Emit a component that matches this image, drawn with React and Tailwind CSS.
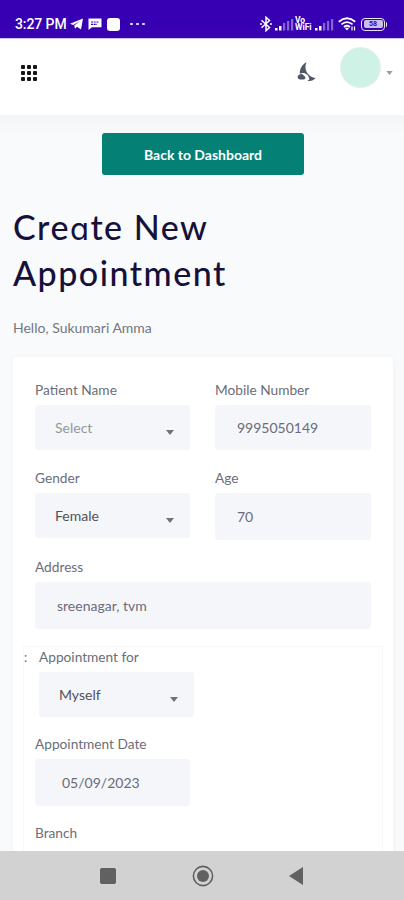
import React from "react";
import clsx from "clsx";

const labelClass = "block h-5 text-[13.7px] leading-5 text-[#6b6d78]";

const Caret = ({ className }) => (
  <svg viewBox="0 0 8 5" className={className} fill="currentColor">
    <path d="M0 0h8L4 5z" />
  </svg>
);

const SignalBars = () => (
  <svg viewBox="0 0 19 13" className="w-[19px] h-[13px]" fill="white">
    <rect x="0" y="10" width="2.5" height="2.5" />
    <rect x="4" y="8" width="2.5" height="4.5" />
    <rect x="8" y="5" width="2.2" height="7.5" opacity="0.4" />
    <rect x="12" y="3" width="2.2" height="9.5" opacity="0.4" />
    <rect x="16" y="1" width="2.2" height="11.5" opacity="0.4" />
  </svg>
);

const StatusBar = () => (
  <div className="h-[38px] shrink-0 bg-[#3700b3] text-white flex items-end justify-between pl-[15px] pr-[17px] pb-[4px] font-[Roboto,sans-serif]">
    <div className="flex items-center h-5">
      <span className="w-[53px] text-[14px] font-medium leading-5 tracking-[-0.1px] whitespace-nowrap">3:27 PM</span>
      {/* Telegram */}
      <svg viewBox="0 0 13 12" className="ml-[2px] w-[13px] h-3" fill="white">
        <path d="M0 5.8 13 .4 11 11.6 7 8.8 5 10.8 4.2 7.4 10 3 3.2 7z" />
      </svg>
      {/* Message */}
      <svg viewBox="0 0 14 12" className="ml-[5px] w-[14px] h-3" fill="white">
        <path d="M.5.5h13v8.7H4L.5 12z" />
        <path d="M3 4h8M3 6.3h6" stroke="#3700b3" strokeWidth="1.2" strokeDasharray="2 .7" />
      </svg>
      <span className="ml-[5px] size-[13px] rounded-[3px] bg-white" />
      <span className="ml-[10px] flex gap-[3.5px]">
        <span className="size-[2.5px] rounded-full bg-white/90" />
        <span className="size-[2.5px] rounded-full bg-white/90" />
        <span className="size-[2.5px] rounded-full bg-white/90" />
      </span>
    </div>
    <div className="flex items-center h-5">
      {/* Bluetooth */}
      <svg viewBox="0 0 12 16" className="w-[12px] h-4" fill="none" stroke="white" strokeWidth="1.5">
        <path d="M1.5 4.3 9.5 11.5 6 14.8V1.2l3.5 3.3-8 7.2" />
        <path d="M0 8h2M10 8h2" />
      </svg>
      <span className="ml-[3px] flex"><SignalBars /></span>
      <span className="ml-[1px] w-[18px] flex flex-col text-[8.5px] font-bold leading-[7.5px]">
        <span>Vo</span>
        <span>WiFi</span>
      </span>
      <span className="ml-[2px] flex"><SignalBars /></span>
      {/* Wi-Fi */}
      <svg viewBox="0 0 18 14" className="ml-[4px] w-[18px] h-[14px]" fill="none" stroke="white" strokeWidth="1.8">
        <path d="M.8 4.7Q9-2.2 17.2 4.7M3.4 7.4Q9 2.8 14.6 7.4M6 10Q9 7.5 12 10" />
        <path d="m9 13.5-2.3-2.8h4.6z" fill="white" stroke="none" />
        <path d="M14 9.5v4M16.5 9.5v4" strokeWidth="1.2" />
      </svg>
      <span className="ml-[5px] w-[24px] h-[13px] rounded-[4px] border-[1.5px] border-white/90 p-[1.5px]">
        <span className="flex h-full items-center justify-center rounded-[2px] bg-white/75 text-[7px] font-bold leading-none text-[#3700b3]">
          58
        </span>
      </span>
      <span className="ml-[0.5px] w-[1.5px] h-[5px] rounded-r bg-white/90" />
    </div>
  </div>
);

const Header = () => (
  <header className="h-[77px] shrink-0 bg-white flex items-start justify-between border-t border-[#cfc3ef] pl-[21px] pr-[11px] shadow-[0_4px_24px_rgba(100,110,110,0.12)]">
    <div className="mt-[26px] grid grid-cols-3 gap-[2px]">
      {Array.from({ length: 9 }, (_, i) => (
        <span key={i} className="size-[4px] rounded-[1px] bg-[#161616]" />
      ))}
    </div>
    <div className="flex items-start">
      <svg viewBox="0 0 19 20" className="mt-[23px] w-[19px] h-5" fill="#505963">
        <path d="M9.6.3C7.7 4.1 8.2 8.6 11 11.9c1.9 2.3 4.5 3.7 7.5 4.1-1.5 1.8-3.6 2.9-6 3-.7 0-1.3 0-2-.2l1.8-1.2c.1-2.7-1.5-5.3-4.1-6.2-1.7-.6-3.8-.4-5.4.4C2.6 7.3 5.2 2 9.6.3Z" />
        <path d="M4.2 12c1.3 0 2.4.8 2.8 2 .8.1 1.4.8 1.4 1.7 0 1-.8 1.7-1.8 1.7H3.2C1.7 17.4.6 16.3.6 15c0-1 .6-1.8 1.5-2.1.5-.6 1.2-.9 2.1-.9Z" />
      </svg>
      <span className="ml-[24px] mt-[8px] size-[41px] rounded-full bg-[#cff2e7] border border-[#e8eeec]" />
      <Caret className="ml-[5px] mt-[32px] w-[7px] h-[4px] text-[#999da1]" />
    </div>
  </header>
);

const Field = ({ label, value, select, muted, tall, inset, className }) => (
  <div className={className}>
    <label className={labelClass}>{label}</label>
    <div
      className={clsx(
        "mt-[5px] flex items-center rounded-[3px] bg-[#f4f6fa] text-[14px] pr-4",
        tall ? "h-[47px]" : "h-[45px]",
        select ? "pl-5" : inset || "pl-[22px]",
        muted ? "text-[#94969d]" : select ? "text-[#50525a]" : "text-[#6a6c7a]"
      )}
    >
      <span className="flex-1">{value}</span>
      {select && <Caret className="mt-[9px] w-[8px] h-[5px] text-[#707278]" />}
    </div>
  </div>
);

const NavBar = () => (
  <nav className="h-[49px] shrink-0 bg-[#d2d2d2] flex items-center pl-[100px]">
    <span className="mt-px size-[16px] rounded-[2px] bg-[#616161]" />
    <svg viewBox="0 0 22 22" className="ml-[76px] mt-px size-[22px]">
      <circle cx="11" cy="11" r="9.6" fill="none" stroke="#616161" strokeWidth="1.6" />
      <circle cx="11" cy="11" r="6" fill="#616161" />
    </svg>
    <svg viewBox="0 0 14 18" className="ml-[75px] mt-px w-[14px] h-[18px]" fill="#616161">
      <path d="M14 0v18L0 9z" />
    </svg>
  </nav>
);

const App = () => {
  return (
    <div className="w-[404px] h-[900px] flex flex-col overflow-hidden bg-[#f8fafc] font-[Lato,sans-serif]">
      <StatusBar />
      <Header />

      <main className="flex-1 min-h-0 overflow-hidden pl-[13px] pr-[11px] pt-[18px] bg-linear-to-b from-[#f3f5f6] to-[#f8fafc] to-[24px]">
        <button className="block ml-[89px] w-[202px] h-[42px] rounded-[3px] bg-[#058075] text-white text-[14px] font-bold">
          Back to Dashboard
        </button>

        <h1 className="mt-[29px] text-[34px] leading-[46px] font-medium tracking-[1.5px] text-[#16113a]">
          Cre<span className="font-[Inter,sans-serif] text-[31px] font-normal leading-none [font-feature-settings:'cv11']">a</span>te New
          <br />
          Appointment
        </h1>

        <p className="mt-[22px] text-[14px] leading-5 text-[#74767f]">Hello, Sukumari Amma</p>

        {/* Appointment form */}
        <section className="mt-[19px] h-[520px] rounded-[3px] bg-white px-[10px] pt-[23px] shadow-[0_0_5px_rgba(80,90,110,0.06)]">
          <div className="px-3">
            <div className="grid grid-cols-[155px_156px] gap-x-[25px] gap-y-[18px]">
              <Field label="Patient Name" value="Select" select muted />
              <Field label="Mobile Number" value="9995050149" />
              <Field label="Gender" value="Female" select />
              <Field label="Age" value="70" tall />
            </div>
            <Field className="mt-[17px]" label="Address" value="sreenagar, tvm" tall />
          </div>

          <div className="mt-[17px] h-[300px] border border-[#f7f7f9] pl-[11px]">
            <div className="flex -ml-[11px]">
              <span className="w-[15px] text-[13px] leading-5 text-[#6b6d78]">:</span>
              <Field className="w-[155px]" label="Appointment for" value="Myself" select />
            </div>
            <Field className="mt-[17px] w-[155px]" label="Appointment Date" value="05/09/2023" tall inset="pl-[27px]" />
            <label className={clsx(labelClass, "mt-[17px]")}>Branch</label>
          </div>
        </section>
      </main>

      <NavBar />
    </div>
  );
};

export default App;
